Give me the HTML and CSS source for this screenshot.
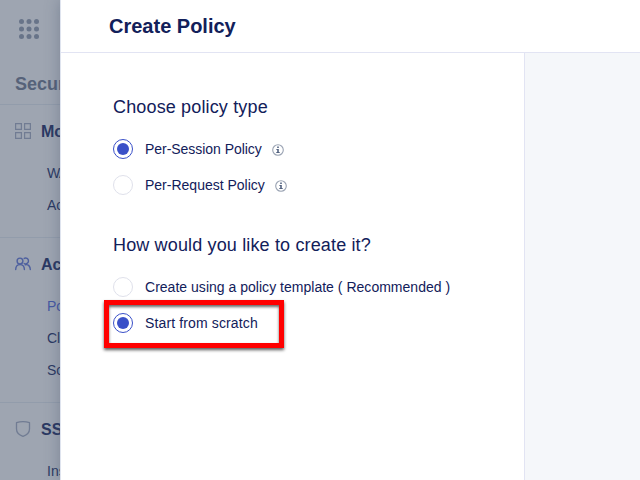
FILE: index.html
```html
<!DOCTYPE html>
<html lang="en">
<head>
<meta charset="utf-8">
<title>Create Policy</title>
<link rel="stylesheet" href="styles.css">
</head>
<body>
<div class="app">
  <aside class="sidebar">
    <div class="launcher">
      <svg width="20" height="20" viewBox="0 0 20 20" fill="#687489">
        <circle cx="2.5" cy="2.5" r="2.5"/><circle cx="10" cy="2.5" r="2.5"/><circle cx="17.5" cy="2.5" r="2.5"/>
        <circle cx="2.5" cy="10" r="2.5"/><circle cx="10" cy="10" r="2.5"/><circle cx="17.5" cy="10" r="2.5"/>
        <circle cx="2.5" cy="17.5" r="2.5"/><circle cx="10" cy="17.5" r="2.5"/><circle cx="17.5" cy="17.5" r="2.5"/>
      </svg>
    </div>
    <div class="product">Secur</div>
    <section class="group">
      <h3 class="group-title">
        <svg width="16" height="16" viewBox="0 0 16 16" fill="none" stroke="#717c93" stroke-width="1.2">
          <path d="M.6.6h5.8v5.8H.6zM9.6.6h5.8v5.8H9.6zM.6 9.6h5.8v5.8H.6zM9.6 9.6h5.8v5.8H9.6z"/>
        </svg>
        <span>Mo</span>
      </h3>
      <div class="item waf">WA</div>
      <div class="item">Ac</div>
    </section>
    <section class="group">
      <h3 class="group-title">
        <svg width="16" height="16" viewBox="0 0 16 16" fill="none" stroke="#4d5f9f" stroke-width="1.4" stroke-linecap="round">
          <circle cx="5" cy="5" r="2.900"/>
          <path d="M.7 13.600c0-3 1.700-5 4.300-5s4.400 2 4.400 5M9.200 2.400a2.900 2.900 0 1 1 0 5.100M10.200 8.800c3-.8 5.100 1.400 5.100 4.800"/>
        </svg>
        <span>Ac</span>
      </h3>
      <div class="item active">Po</div>
      <div class="item">Cl</div>
      <div class="item">So</div>
    </section>
    <section class="group">
      <h3 class="group-title">
        <svg width="16" height="16" viewBox="0 0 16 16" fill="none" stroke="#717c93" stroke-width="1.3" stroke-linejoin="round">
          <path d="M1.500 1.700Q8-.4 14.500 1.700V8c0 3.700-2.500 6-6.500 7.400C4 14 1.500 11.700 1.500 8z"/>
        </svg>
        <span>SS</span>
      </h3>
      <div class="item">Ins</div>
    </section>
  </aside>
  <main class="panel">
    <header class="panel-header"><h1>Create Policy</h1></header>
    <div class="panel-body">
      <div class="form">
        <h2 class="q1">Choose policy type</h2>
        <div class="option">
          <span class="radio checked"></span><span class="per-session">Per-Session Policy</span>
          <svg class="info" width="12" height="12" viewBox="0 0 12 12"><circle cx="6" cy="6" r="5.300" fill="none" stroke="#9aa3b3" stroke-width="1.100"/><path d="M5.200 2.500h1.600V4H5.200zM4.400 5h2.400v3h.9v1H4.300V8h.9V6h-.8z" fill="#52617f"/></svg>
        </div>
        <div class="option">
          <span class="radio"></span><span class="per-request">Per-Request Policy</span>
          <svg class="info" width="12" height="12" viewBox="0 0 12 12"><circle cx="6" cy="6" r="5.300" fill="none" stroke="#9aa3b3" stroke-width="1.100"/><path d="M5.200 2.500h1.600V4H5.200zM4.400 5h2.400v3h.9v1H4.300V8h.9V6h-.8z" fill="#52617f"/></svg>
        </div>
        <h2 class="q2">How would you like to create it?</h2>
        <div class="option">
          <span class="radio"></span><span class="template">Create using a policy template ( Recommended )</span>
        </div>
        <div class="option marked">
          <span class="radio checked"></span><span class="scratch">Start from scratch</span>
          <div class="marker"></div>
        </div>
      </div>
      <div class="side"></div>
    </div>
  </main>
</div>
</body>
</html>
```
FILE: styles.css
```css
* { box-sizing: border-box; }
body {
  margin: 0;
  font-family: "Liberation Sans", Arial, sans-serif;
  color: #12205a;
}
h1, h2, h3 { margin: 0; }
.app {
  display: grid;
  grid-template-columns: 60px 580px;
  height: 480px;
  overflow: hidden;
}
.sidebar {
  overflow: hidden;
  white-space: nowrap;
  background: #9ea5b1;
  color: #2b3963;
}
.launcher { height: 64px; padding: 19px 0 0 19px; }
.launcher svg { display: block; }
.product {
  height: 40px;
  padding-left: 15px;
  font-size: 18px;
  font-weight: bold;
  line-height: 40px;
  color: #566279;
}
.group {
  border-top: 1px solid #929cab;
  padding: 10px 0 16px 15px;
}
.group-title {
  display: flex;
  align-items: center;
  gap: 10px;
  height: 32px;
  margin-bottom: 10px;
  font-size: 16px;
}
.group-title svg { flex: none; }
.group-title span { padding-top: 2px; }
.item {
  height: 32px;
  padding-left: 32px;
  font-size: 14px;
  line-height: 32px;
}
.waf { letter-spacing: -.6px; }
.active { color: #4558a3; }
.panel {
  position: relative;
  display: flex;
  flex-direction: column;
  background: #fff;
  border-left: 1px solid #dfe4ef;
  box-shadow: 0 0 14px rgba(55, 72, 100, .35);
}
.panel-header {
  height: 53px;
  padding-left: 48px;
  border-bottom: 1px solid #e2e4f3;
}
h1 { font-size: 20px; line-height: 52px; }
.panel-body { display: flex; flex: 1; }
.form { width: 463px; padding: 40px 0 0 52px; }
.side {
  flex: 1;
  background: #f5f7fa;
  border-left: 1px solid #e2e4f3;
}
h2 {
  height: 28px;
  font-size: 18px;
  font-weight: normal;
  line-height: 28px;
  letter-spacing: .15px;
  white-space: nowrap;
}
.q1 { margin-bottom: 10px; }
.q2 { margin: 28px 0 10px; }
.option {
  display: flex;
  align-items: center;
  height: 36px;
  font-size: 14px;
  white-space: nowrap;
}
.radio {
  display: flex;
  width: 20px;
  height: 20px;
  margin-right: 12px;
  border: 1px solid #dfe1eb;
  border-radius: 50%;
}
.checked { border-color: #3a50c8; }
.checked::after {
  content: "";
  width: 12px;
  height: 12px;
  margin: 3px;
  border-radius: 50%;
  background: #3a50c8;
}
.per-session { letter-spacing: -.04px; }
.template { letter-spacing: .02px; }
.scratch { letter-spacing: .13px; }
.info { margin: 2px 0 0 10px; }
.marked { position: relative; }
.marker {
  position: absolute;
  left: -9px;
  top: -5px;
  width: 180px;
  height: 48px;
  border: 5px solid #f00;
  box-shadow: 0 2px 3px rgba(0, 0, 0, .65), inset 0 2px 3px rgba(0, 0, 0, .6);
}
```
